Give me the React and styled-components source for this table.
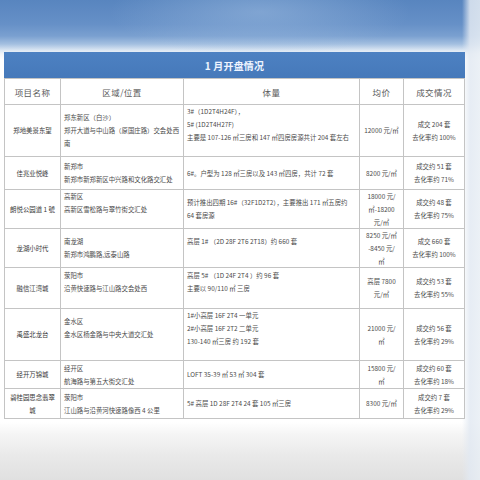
import React from "react";
import styled, { createGlobalStyle } from "styled-components";

const Global = createGlobalStyle`
  html, body { margin: 0; padding: 0; }
  body { font-family: "Noto Sans CJK SC", "Noto Sans", sans-serif; }
`;

const Page = styled.div`
  width: 480px;
  height: 480px;
  overflow: hidden;
  box-sizing: border-box;
  padding: 52px 0 0 4px;
  background:
    radial-gradient(ellipse 150px 45px at 260px 12px, rgba(160, 190, 225, 0.5), rgba(160, 190, 225, 0) 100%),
    linear-gradient(to right, rgba(255,255,255,0) 462px, rgba(226, 233, 242, 0.85) 470px, rgba(232, 238, 244, 0.85) 480px),
    linear-gradient(to bottom, #5885bf 0px, #6690c7 24px, #7aa0d0 36px, #a3bfe0 44px, #d9e5f2 50px, #f3f6fa 54px, #ffffff 60px, #ffffff 422px, #f5f5f5 434px, #e9e9e9 456px, #e0e0e0 480px);
`;

const TableBox = styled.div`
  width: 461px;
  display: flex;
  flex-direction: column;
`;

const TitleBand = styled.div`
  height: 26px;
  background: linear-gradient(to bottom, #4d81c2, #4679ba);
  color: #eef4ff;
  font-size: 10px;
  font-weight: 700;
  display: flex;
  align-items: center;
  justify-content: center;
  letter-spacing: 0.2px;
`;

const Grid = styled.div`
  display: grid;
  grid-template-columns: 55px 122px 175px 43px 60px;
  grid-template-rows: ${(p) => p.$rows};
  gap: 1px;
  padding: 1px;
  background: #c4c4c4;
`;

const HeadCell = styled.div`
  background: #ffffff;
  color: #5a5a5a;
  font-size: 8.5px;
  letter-spacing: 0.4px;
  display: flex;
  align-items: center;
  justify-content: center;
`;

const Cell = styled.div`
  background: #ffffff;
  display: flex;
  flex-direction: column;
  justify-content: center;
  align-items: ${(p) => (p.$left ? "flex-start" : "center")};
  padding-left: ${(p) => (p.$left ? "3px" : "0")};
  color: ${(p) => (p.$strong ? "#3a3a3a" : "#4a4a4a")};
  font-size: 6.4px;
  overflow: visible;
`;

const Line = styled.div`
  height: 13px;
  line-height: 13px;
  white-space: nowrap;
`;

const heads = ["项目名称", "区域/位置", "体量", "均价", "成交情况"];

const rows = [
  {
    h: 51,
    name: ["郑地美景东望"],
    area: ["郑东新区（白沙）", "郑开大道与中山路（原国庄路）交会处西", "南"],
    vol: ["3#（1D2T4H24F），", "5# (1D2T4H27F)", "主要是 107-126 ㎡三房和 147 ㎡四房房源共计 204 套左右", ""],
    price: ["12000 元/㎡"],
    deal: ["成交 204 套", "去化率约 100%"],
  },
  {
    h: 32,
    name: ["佳兆业悦峰"],
    area: ["新郑市", "新郑市新郑新区中兴路和文化路交汇处"],
    vol: ["6#。户型为 128 ㎡三房以及 143 ㎡四房，共计 72 套"],
    price: ["8200 元/㎡"],
    deal: ["成交约 51 套", "去化率约 71%"],
  },
  {
    h: 38,
    name: ["朗悦公园道 1 號"],
    area: ["高新区", "高新区雪松路与翠竹街交汇处", ""],
    vol: ["预计推出四期 16#（32F1D2T2），主要推出 171 ㎡五房约", "64 套房源"],
    price: ["18000 元/", "㎡-18200", "元/㎡"],
    deal: ["成交约 48 套", "去化率约 75%"],
  },
  {
    h: 38,
    name: ["龙湖小时代"],
    area: ["南龙湖", "新郑市鸿鹏路,远泰山路"],
    vol: ["高层 1#  （2D 28F 2T6 2T18）约 660 套", ""],
    price: ["8250 元/㎡", "-8450 元/", "㎡"],
    deal: ["成交 660 套", "去化率约 100%"],
  },
  {
    h: 40,
    name: ["融信江湾城"],
    area: ["荥阳市", "沿黄快速路与江山路交会处西", ""],
    vol: ["高层 5#  （1D 24F 2T4 ）约 96 套", "主要以 90/110 ㎡  三房", ""],
    price: ["高层 7800", "元/㎡"],
    deal: ["成交约 53 套", "去化率约 55%"],
  },
  {
    h: 51,
    name: ["禹盛北龙台"],
    area: ["金水区", "金水区杨金路与中央大道交汇处", ""],
    vol: ["1#小高层  16F  2T4  一单元", "2#小高层  16F  2T2  二单元", "130-140 ㎡三房  约 192 套", ""],
    price: ["21000 元/", "㎡"],
    deal: ["成交约 56 套", "去化率约 29%"],
  },
  {
    h: 27,
    name: ["经开万锦城"],
    area: ["经开区", "航海路与第五大街交汇处"],
    vol: ["LOFT  35-39 ㎡  53 ㎡  304 套"],
    price: ["15800 元/", "㎡"],
    deal: ["成交约 60 套", "去化率约 18%"],
  },
  {
    h: 29,
    name: ["碧桂园思念翡翠", "城"],
    area: ["荥阳市", "江山路与沿黄河快速路像西 4 公里"],
    vol: ["5#  高层  1D  28F  2T4   24 套  105 ㎡三房"],
    price: ["8300 元/㎡"],
    deal: ["成交约 7 套", "去化率约 29%"],
  },
];

const Lines = ({ items }) =>
  items.map((t, i) => <Line key={i}>{t || "\u00a0"}</Line>);

export default function App() {
  const template = ["25px", ...rows.map((r) => `${r.h}px`)].join(" ");
  return (
    <>
      <Global />
      <Page>
        <TableBox>
          <TitleBand>1 月开盘情况</TitleBand>
          <Grid $rows={template}>
            {heads.map((h) => (
              <HeadCell key={h}>{h}</HeadCell>
            ))}
            {rows.map((r, i) => (
              <React.Fragment key={i}>
                <Cell $strong>
                  <Lines items={r.name} />
                </Cell>
                <Cell $left>
                  <Lines items={r.area} />
                </Cell>
                <Cell $left>
                  <Lines items={r.vol} />
                </Cell>
                <Cell>
                  <Lines items={r.price} />
                </Cell>
                <Cell>
                  <Lines items={r.deal} />
                </Cell>
              </React.Fragment>
            ))}
          </Grid>
        </TableBox>
      </Page>
    </>
  );
}
